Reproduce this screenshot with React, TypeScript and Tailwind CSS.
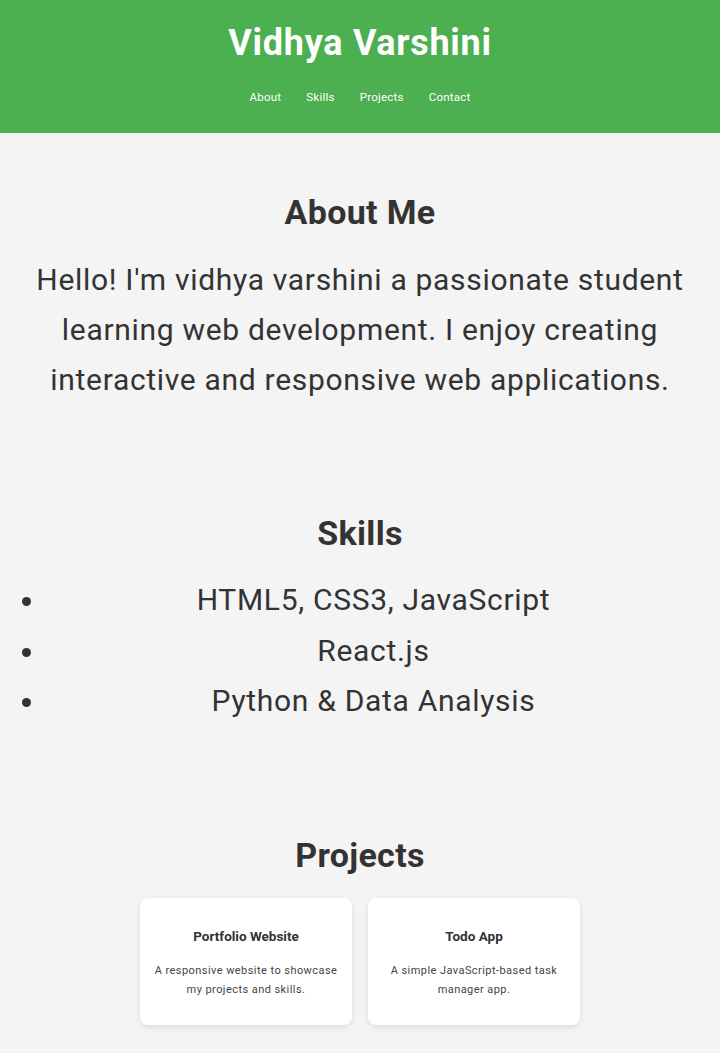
const skills = ['HTML5, CSS3, JavaScript', 'React.js', 'Python & Data Analysis']

const projects = [
  { title: 'Portfolio Website', text: 'A responsive website to showcase my projects and skills.' },
  { title: 'Todo App', text: 'A simple JavaScript-based task manager app.' },
]

export default function App() {
  return (
    <div className="min-h-[1053px] bg-[#f4f4f4] font-['Roboto',sans-serif] text-[#333]">
      <header className="bg-[#4caf50] pt-[21px] pb-[28px] text-center text-white">
        <h1 className="text-[36px] font-bold leading-[44px] tracking-[0.02em]">Vidhya Varshini</h1>
        <nav className="mt-[24px] flex justify-center gap-[25px] text-[11.5px] leading-[16px] tracking-[0.02em]">
          <a href="#about">About</a>
          <a href="#skills">Skills</a>
          <a href="#projects">Projects</a>
          <a href="#contact">Contact</a>
        </nav>
      </header>

      <section id="about" className="px-5 pt-[59px] text-center">
        <h2 className="text-[34px] font-bold leading-[40px] tracking-[0.01em]">About Me</h2>
        <p className="mt-[23px] text-[30px] leading-[50px] tracking-[0.023em]">
          Hello! I'm vidhya varshini a passionate student learning web development. I enjoy creating interactive and
          responsive web applications.
        </p>
      </section>

      <section id="skills" className="px-5 pt-[108px] text-center">
        <h2 className="text-[34px] font-bold leading-[40px] tracking-[0.01em]">Skills</h2>
        <ul className="mt-[22px] list-disc pl-[27px] text-[30px] leading-[50.5px] tracking-[0.023em]">
          {skills.map((s) => (
            <li key={s}>{s}</li>
          ))}
        </ul>
      </section>

      <section id="projects" className="px-5 pt-[108px] text-center">
        <h2 className="text-[34px] font-bold leading-[40px] tracking-[0.01em]">Projects</h2>
        <div className="mt-[23px] flex justify-center gap-4">
          {projects.map((p) => (
            <div key={p.title} className="h-[127px] w-[212px] rounded-lg bg-white px-[14px] pt-[27px] shadow-[0_2px_6px_rgba(0,0,0,0.1)]">
              <h3 className="text-[13.5px] font-bold leading-[22px]">{p.title}</h3>
              <p className="mt-[14px] text-[11px] leading-[19px] tracking-[0.04em] text-[#444]">{p.text}</p>
            </div>
          ))}
        </div>
      </section>
    </div>
  )
}
